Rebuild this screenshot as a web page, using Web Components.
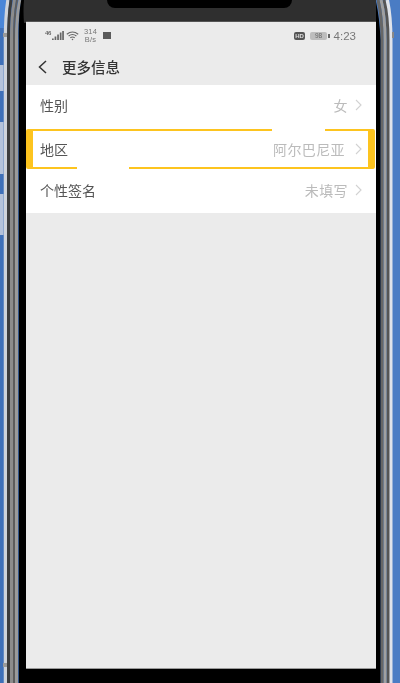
<!DOCTYPE html>
<html lang="zh">
<head>
<meta charset="utf-8">
<title>更多信息</title>
<style>
html, body { margin: 0; padding: 0; height: 100%; background: #4a7cc4; }
body { font-family: "Noto Sans CJK SC", "Noto Sans", sans-serif; }
</style>
</head>
<body>
<phone-frame>
    <status-bar></status-bar>
    <nav-header title-text="更多信息"></nav-header>
    <info-list>
        <info-row label="性别" value="女"></info-row>
        <info-row label="地区" value="阿尔巴尼亚" marked></info-row>
        <info-row label="个性签名" value="未填写"></info-row>
    </info-list>
</phone-frame>

<script>
class PhoneFrame extends HTMLElement {
    constructor() {
        super();
        this.attachShadow({ mode: 'open' });
    }

    connectedCallback() {
        this.shadowRoot.innerHTML = `
            <style>
                :host {
                    display: grid;
                    grid-template-columns: 26px 350px 24px;
                    width: 400px;
                    height: 683px;
                    overflow: hidden;
                    background: #4a7cc4;
                }
                svg { display: block; width: 100%; height: 683px; }
                .middle { display: flex; flex-direction: column; height: 683px; }
                .top {
                    height: 22px;
                    flex-shrink: 0;
                    background: #2f2f2f;
                    border-bottom: 1px solid #555;
                    box-sizing: border-box;
                    display: flex;
                    justify-content: center;
                }
                .notch {
                    width: 185px;
                    height: 8px;
                    margin-left: -3px;
                    background: #000;
                    border-radius: 0 0 12px 12px;
                }
                .screen {
                    flex: 1;
                    display: flex;
                    flex-direction: column;
                    background: #ebebeb;
                    filter: blur(0.5px);
                }
                .chin {
                    height: 15px;
                    flex-shrink: 0;
                    background: #000;
                    border-top: 1px solid #999;
                    box-sizing: border-box;
                }
            </style>
            <svg viewBox="0 0 26 683" fill="none">
                <rect width="26" height="683" fill="#3f70b8"/>
                <g fill="#b4c2da">
                    <rect x="0" y="65" width="3.5" height="26"/>
                    <rect x="0" y="122" width="3.5" height="52"/>
                    <rect x="0" y="194" width="3.5" height="41"/>
                </g>
                <rect x="0" y="0" width="7" height="28" fill="#4a86d8"/>
                <path d="M5.5 683V40Q5.5 16 8 0" stroke="#cfd3da" stroke-width="3.5"/>
                <rect x="3" y="33" width="5" height="4" fill="#9a9a9a"/>
                <rect x="3" y="663" width="5" height="4" fill="#9a9a9a"/>
                <path d="M8.5 683V40Q8.5 16 11 0" stroke="#3c3c3c" stroke-width="3"/>
                <path d="M11.5 683V40Q11.5 16 14.5 0" stroke="#8c8c8c" stroke-width="3"/>
                <path d="M14 683V40Q14 16 17 0" stroke="#5c5c5c" stroke-width="2"/>
                <path d="M16.5 683V40Q16.5 16 20 0" stroke="#9a9a9a" stroke-width="3"/>
                <path d="M22.5 683V40Q22 16 25 0" stroke="#000" stroke-width="7.5"/>
                <path d="M26 0H24Q23 10 24 23H26Z" fill="#2f2f2f"/>
            </svg>
            <div class="middle">
                <div class="top"><div class="notch"></div></div>
                <div class="screen"><slot></slot></div>
                <div class="chin"></div>
            </div>
            <svg viewBox="0 0 24 683" fill="none">
                <rect width="24" height="683" fill="#4a7cc4"/>
                <path d="M14.5 683V40Q14.5 16 11 0" stroke="#dfe3ea" stroke-width="4"/>
                <path d="M12 683V40Q12 16 8 0" stroke="#555" stroke-width="3"/>
                <path d="M9 683V40Q9 16 5 0" stroke="#a0a0a0" stroke-width="3"/>
                <path d="M6 683V40Q6 16 2 0" stroke="#666" stroke-width="3"/>
                <path d="M2 683V40Q1 16 -3 0" stroke="#000" stroke-width="5"/>
                <rect x="16" y="32" width="2" height="6" fill="#888"/>
            </svg>
        `;
    }
}

class StatusBar extends HTMLElement {
    constructor() {
        super();
        this.attachShadow({ mode: 'open' });
    }

    connectedCallback() {
        this.shadowRoot.innerHTML = `
            <style>
                :host {
                    display: flex;
                    align-items: center;
                    justify-content: space-between;
                    height: 27px;
                    padding: 0 20px 0 19px;
                    color: #666;
                    font-family: "Liberation Sans", Arial, sans-serif;
                }
                .side { display: flex; align-items: center; }
                svg { display: block; }
                .net { font-size: 6px; font-weight: bold; line-height: 6px; align-self: flex-start; margin-top: 2px; letter-spacing: -0.3px; width: 7px; }
                .speed { font-size: 7.5px; line-height: 8px; margin-left: 5px; text-align: center; color: #777; letter-spacing: 0.2px; }
                .stop { width: 8px; height: 7px; background: #5a5a5a; margin-left: 6px; }
                .hd {
                    width: 11px; height: 8px; border-radius: 2px; background: #555; color: #ddd;
                    font-size: 6px; font-weight: bold; line-height: 8px; text-align: center;
                }
                .battery {
                    width: 17px; height: 8px; border-radius: 2px; background: #bdbdbd; color: #666;
                    font-size: 6.5px; line-height: 8px; text-align: center; margin-left: 5px;
                }
                .tip { width: 1.5px; height: 4px; background: #666; margin: 0 4px 0 1px; }
                .time { font-size: 11.5px; color: #777; }
            </style>
            <div class="side">
                <span class="net">46</span>
                <svg width="12" height="11" viewBox="0 0 12 11" fill="#666">
                    <rect x="0" y="8.5" width="1.7" height="1.5"/>
                    <rect x="2.6" y="6.5" width="1.7" height="3.5"/>
                    <rect x="5.2" y="4.5" width="1.7" height="5.5"/>
                    <rect x="7.8" y="2.5" width="1.7" height="7.5"/>
                    <rect x="10.2" y="1" width="1.7" height="9"/>
                </svg>
                <svg width="13" height="10" viewBox="0 0 13 10" fill="none" stroke="#666" stroke-width="1.2" style="margin-left:2px">
                    <path d="M0.8 3.2Q6.5-1.2 12.2 3.2"/>
                    <path d="M2.6 5Q6.5 2 10.4 5"/>
                    <path d="M4.3 6.8Q6.5 5.2 8.7 6.8"/>
                    <path d="M5.9 8.6Q6.5 8.2 7.1 8.6" stroke-width="1.5"/>
                </svg>
                <span class="speed">314<br>B/s</span>
                <span class="stop"></span>
            </div>
            <div class="side">
                <span class="hd">HD</span>
                <span class="battery">98</span>
                <span class="tip"></span>
                <span class="time">4:23</span>
            </div>
        `;
    }
}

class NavHeader extends HTMLElement {
    constructor() {
        super();
        this.attachShadow({ mode: 'open' });
    }

    connectedCallback() {
        const title = this.getAttribute('title-text') || '';
        this.shadowRoot.innerHTML = `
            <style>
                :host {
                    display: flex;
                    align-items: center;
                    height: 36px;
                    padding-left: 12px;
                    padding-bottom: 1px;
                    box-sizing: border-box;
                    color: #333;
                }
                svg { display: block; flex-shrink: 0; }
                span { margin-left: 15px; font-size: 14.5px; font-weight: 500; letter-spacing: 0; }
            </style>
            <svg width="9" height="14" viewBox="0 0 9 14" fill="none" stroke="#333" stroke-width="1.5">
                <path d="M8 1L1.5 7L8 13"/>
            </svg>
            <span>${title}</span>
        `;
    }
}

class InfoList extends HTMLElement {
    constructor() {
        super();
        this.attachShadow({ mode: 'open' });
    }

    connectedCallback() {
        this.shadowRoot.innerHTML = `
            <style>
                :host { display: flex; flex-direction: column; background: #fff; }
            </style>
            <slot></slot>
        `;
    }
}

class InfoRow extends HTMLElement {
    constructor() {
        super();
        this.attachShadow({ mode: 'open' });
    }

    connectedCallback() {
        const label = this.getAttribute('label') || '';
        const value = this.getAttribute('value') || '';
        this.shadowRoot.innerHTML = `
            <style>
                :host {
                    display: flex;
                    align-items: center;
                    position: relative;
                    height: 43px;
                    padding: 0 14px 3px 14px;
                    box-sizing: border-box;
                    font-size: 14px;
                    background: #fff;
                }
                :host([marked]) { height: 42px; padding-bottom: 1px; }
                .label { color: #555; flex: 1; }
                .value { color: #bbb; letter-spacing: 0.4px; }
                svg { display: block; margin-left: 7px; }
                :host([marked]) svg { margin-left: 10px; }
                .mark { display: none; }
                :host([marked]) .mark {
                    display: block;
                    position: absolute;
                    top: 1px;
                    right: 1px;
                    bottom: 1px;
                    left: 0;
                    border: solid #fdc41f;
                    border-width: 2px 7px 2px 7px;
                    border-radius: 2px;
                }
                .gap { position: absolute; height: 2px; background: #fff; }
                .gap.top { top: -2px; left: 239px; width: 53px; }
                .gap.bottom { bottom: -2px; left: 44px; width: 52px; }
            </style>
            <span class="label">${label}</span>
            <span class="value">${value}</span>
            <svg width="7" height="12" viewBox="0 0 7 12" fill="none" stroke="#d2d2d2" stroke-width="1.1">
                <path d="M1 1L6 6L1 11"/>
            </svg>
            <div class="mark">
                <div class="gap top"></div>
                <div class="gap bottom"></div>
            </div>
        `;
    }
}

customElements.define('phone-frame', PhoneFrame);
customElements.define('status-bar', StatusBar);
customElements.define('nav-header', NavHeader);
customElements.define('info-list', InfoList);
customElements.define('info-row', InfoRow);
</script>
</body>
</html>
